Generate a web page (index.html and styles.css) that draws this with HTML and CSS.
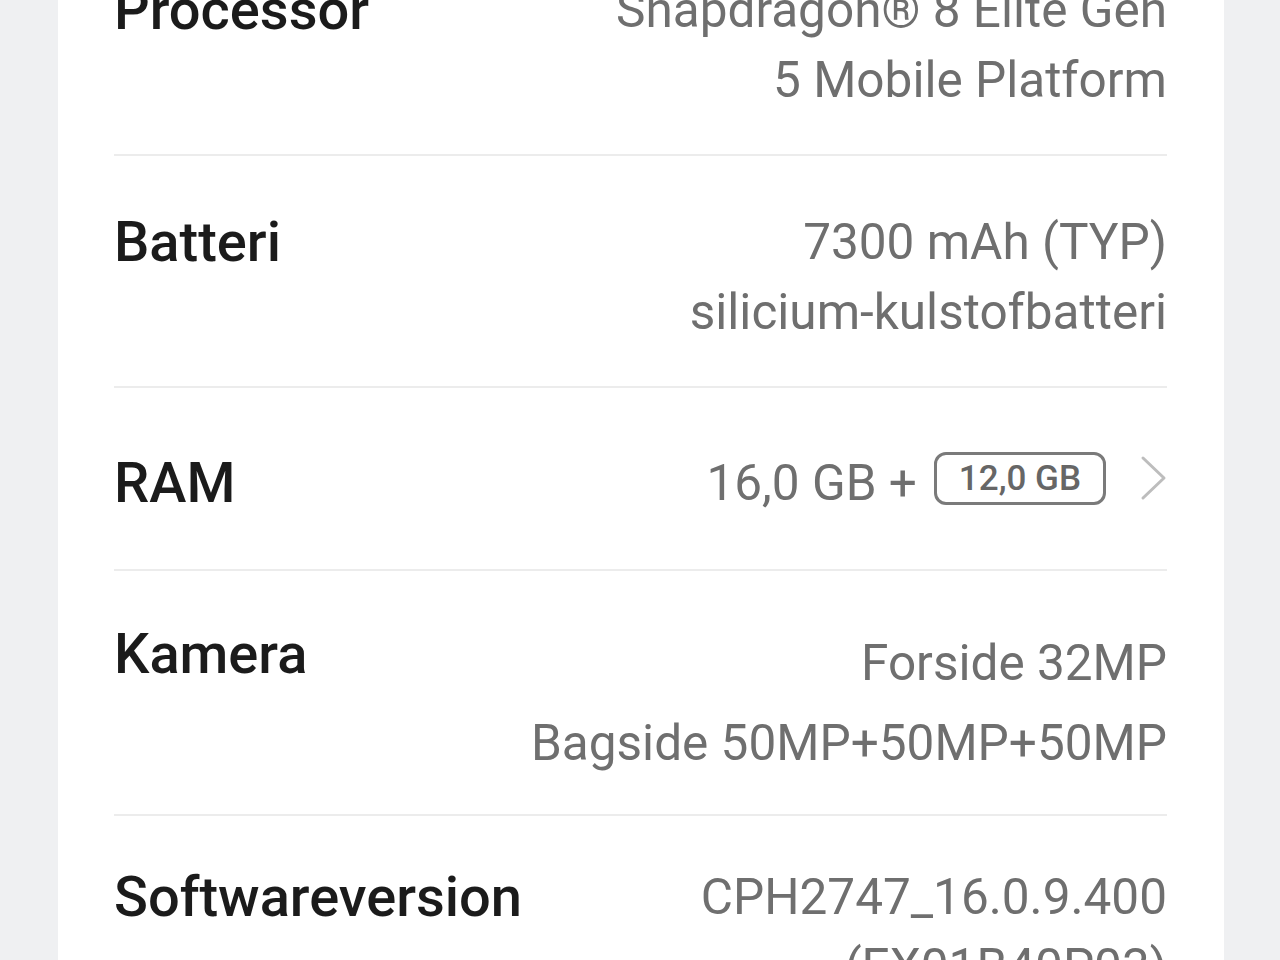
FILE: index.html
```html
<!DOCTYPE html>
<html lang="da">
<head>
    <meta charset="UTF-8">
    <meta name="viewport" content="width=device-width, initial-scale=1.0">
    <title>Om enheden</title>
    <link rel="stylesheet" href="styles.css">
</head>
<body>
    <div class="page">
        <div class="card">
            <div class="row">
                <div class="label">Processor</div>
                <div class="value">
                    <span class="line">Snapdragon® 8 Elite Gen</span>
                    <span class="line">5 Mobile Platform</span>
                </div>
            </div>

            <div class="row">
                <div class="label">Batteri</div>
                <div class="value">
                    <span class="line">7300 mAh (TYP)</span>
                    <span class="line">silicium-kulstofbatteri</span>
                </div>
            </div>

            <div class="row row-ram">
                <div class="label">RAM</div>
                <div class="value value-inline">
                    <span>16,0 GB +</span>
                    <span class="badge">12,0 GB</span>
                    <svg class="chevron" width="28" height="46" viewBox="0 0 28 46">
                        <polyline points="4,3 25,23 4,43" fill="none" stroke="#bdbdbd" stroke-width="3" stroke-linecap="round" stroke-linejoin="round"/>
                    </svg>
                </div>
            </div>

            <div class="row row-camera">
                <div class="label">Kamera</div>
                <div class="value">
                    <span class="line">Forside 32MP</span>
                    <span class="line">Bagside 50MP+50MP+50MP</span>
                </div>
            </div>

            <div class="row row-software">
                <div class="label">Softwareversion</div>
                <div class="value">
                    <span class="line">CPH2747_16.0.9.400</span>
                    <span class="line">(EX01B40P03)</span>
                </div>
            </div>
        </div>
    </div>
</body>
</html>
```

FILE: styles.css
```css
html, body {
    margin: 0;
    height: 100%;
    overflow: hidden;
}

body {
    background-color: #eff0f2;
    font-family: Roboto, "Noto Sans", "Liberation Sans", sans-serif;
}

.page {
    padding: 0 56px 0 58px;
}

.card {
    background-color: #ffffff;
    margin-top: -76px;
    padding: 0 57px 0 56px;
    min-height: 1100px;
}

.row {
    display: flex;
    justify-content: space-between;
    align-items: flex-start;
    padding: 51px 0 39px;
    border-bottom: 2px solid #ececec;
}

.label {
    font-size: 56px;
    font-weight: 500;
    line-height: 70px;
    color: #1b1b1b;
    white-space: nowrap;
}

.value {
    font-size: 49.5px;
    line-height: 70px;
    color: #6f6f6f;
    text-align: right;
}

.line {
    display: block;
    white-space: nowrap;
}

.value-inline {
    display: flex;
    align-items: center;
    height: 70px;
}

.badge {
    box-sizing: border-box;
    height: 53px;
    line-height: 47px;
    margin: 0 0 10px 17px;
    padding: 0 22px;
    border: 3px solid #7a7a7a;
    border-radius: 12px;
    font-size: 35px;
    font-weight: 500;
    color: #666666;
}

.chevron {
    margin: 0 0 10px 33px;
}

.row-ram {
    padding: 60px 0 51px;
}

.row-camera {
    padding: 52px 0 31px;
}

.row-camera .label {
    margin-top: -4px;
}

.row-camera .value {
    line-height: 80px;
}

.row-software {
    padding-top: 46px;
    border-bottom: none;
}
```
